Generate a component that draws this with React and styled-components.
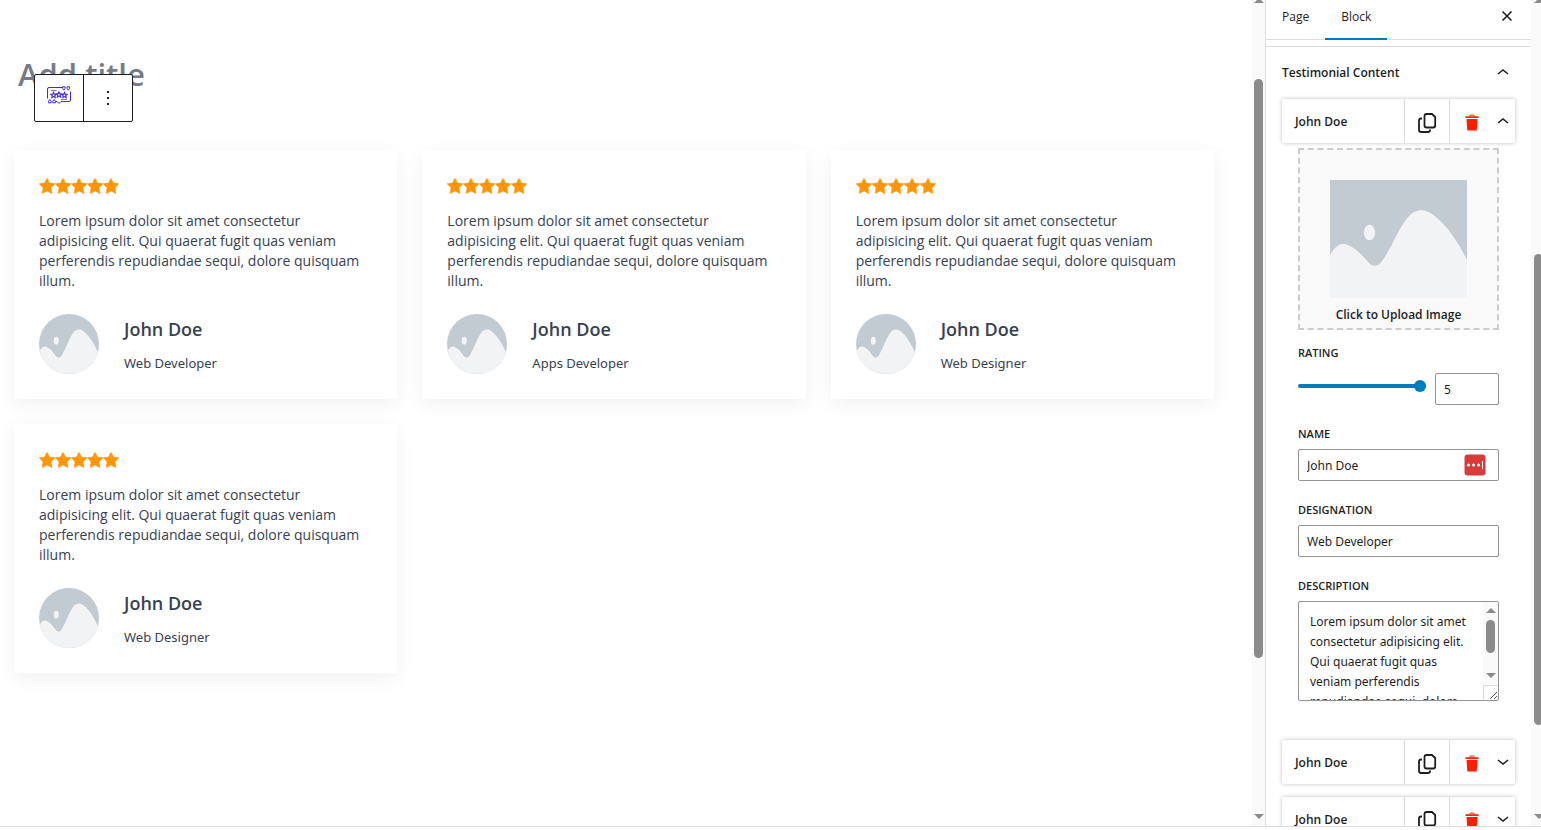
import React, { useState } from 'react';
import styled, { createGlobalStyle } from 'styled-components';

const LOREM =
  'Lorem ipsum dolor sit amet consectetur adipisicing elit. Qui quaerat fugit quas veniam perferendis repudiandae sequi, dolore quisquam illum.';

const testimonials = [
  { id: 1, name: 'John Doe', designation: 'Web Developer' },
  { id: 2, name: 'John Doe', designation: 'Apps Developer' },
  { id: 3, name: 'John Doe', designation: 'Web Designer' },
  { id: 4, name: 'John Doe', designation: 'Web Designer' },
];

function Placeholder({ stretch }) {
  return (
    <svg
      viewBox="0 0 137 118"
      width="100%"
      height="100%"
      preserveAspectRatio={stretch ? 'none' : 'xMidYMid meet'}
      aria-hidden="true"
    >
      <rect width="137" height="118" fill="#c2cad2" />
      <path
        d="M0 75C5 66 11 62 18 65C26 68 33 76 39 83C43 87 48 87 52 81C63 66 69 46 80 35C88 28 97 29 106 37C118 47 128 62 137 80V118H0Z"
        fill="#f1f3f5"
      />
      <ellipse cx="39.5" cy="52.5" rx="5.7" ry="7.7" fill="#f1f3f5" />
    </svg>
  );
}

function Star() {
  return (
    <svg viewBox="0 0 16 16" width="16" height="16" aria-hidden="true">
      <path
        fill="#ff9500"
        stroke="#ff9500"
        strokeWidth="0.6"
        strokeLinejoin="round"
        d="M8 0.3L10.4 5L15.8 5.8L11.9 9.7L12.8 15.5L8 13L3.2 15.5L4.1 9.7L0.2 5.8L5.6 5Z"
      />
    </svg>
  );
}

function BlockIcon() {
  const star = 'l.8 1.7 1.8.2-1.3 1.3.3 1.8-1.6-.9-1.6.9.3-1.8-1.3-1.3 1.8-.2z';
  return (
    <svg viewBox="0 0 24 19" width="24" height="19" fill="none" stroke="#4527d6" aria-hidden="true">
      <path d="M15 1.5H2Q.5 1.5 .5 3V12.5M8.5 15.5H10l2 2 2-2h8q1.5 0 1.5-1.5V5.5" />
      <path d="M4 4.5h5.5M14 13.5h6" strokeOpacity="0.7" />
      <path strokeWidth="1.2" d={`M6.5 6.5${star}M12 6${star}M17.5 6.5${star}`} />
      <path d="M15.5.8h2.6v1.6l-1.3 1.8-1.3-1.8zM20 .8h2.6v1.6l-1.3 1.8-1.3-1.8zM1.5 16.8h2.6v-1.6l-1.3-1.8-1.3 1.8zM5.8 16.8h2.6v-1.6l-1.3-1.8-1.3 1.8z" />
    </svg>
  );
}

function CopyIcon() {
  return (
    <svg viewBox="0 0 20 22" width="20" height="22" fill="none" stroke="#1e1e1e" strokeWidth="1.8" aria-hidden="true">
      <path d="M9.5 2H15l3.2 3v8.5q0 2-2 2H9.5q-2 0-2-2V4q0-2 2-2z" />
      <path d="M5 6.5H4.2Q2 6.5 2 8.500V18q0 2 2.2 2H11q2 0 2-2v-.5" />
    </svg>
  );
}

function TrashIcon() {
  return (
    <svg viewBox="0 0 14 17" width="14" height="17" aria-hidden="true">
      <path fill="none" stroke="#ff1f00" d="M4.5 2.5Q4.5 1 6 1h2q1.5 0 1.5 1.5" />
      <path fill="#ff1f00" d="M.5 2.2h13v1.8H.5zM1.5 5h11l-.8 11.5H2.3z" />
    </svg>
  );
}

function Chevron({ open }) {
  return (
    <svg viewBox="0 0 12 8" width="12" height="8" fill="none" stroke="#1e1e1e" strokeWidth="1.6" aria-hidden="true">
      <path d={open ? 'M1 6L6 2l5 4' : 'M1 2L6 6l5-4'} />
    </svg>
  );
}

function Scrollbar({ before, size, variant }) {
  return (
    <Track $variant={variant} aria-hidden="true">
      <Arrow $up />
      <Spacer $grow={before} />
      <Thumb $grow={size} />
      <Spacer $grow={100 - before - size} />
      <Arrow />
    </Track>
  );
}

function TestimonialCard({ name, designation }) {
  return (
    <Card>
      <Stars role="img" aria-label="5 stars">
        {[1, 2, 3, 4, 5].map((n) => (
          <Star key={n} />
        ))}
      </Stars>
      <Quote>{LOREM}</Quote>
      <Author>
        <Avatar>
          <Placeholder stretch />
        </Avatar>
        <div>
          <Name>{name}</Name>
          <Designation>{designation}</Designation>
        </div>
      </Author>
    </Card>
  );
}

function ItemHeader({ name, open, onToggle }) {
  return (
    <Item>
      <ItemTitle>{name}</ItemTitle>
      <CopyButton aria-label="Duplicate">
        <CopyIcon />
      </CopyButton>
      <DeleteButton aria-label="Remove">
        <TrashIcon />
      </DeleteButton>
      <ToggleButton aria-label="Toggle" aria-expanded={open} onClick={onToggle}>
        <Chevron open={open} />
      </ToggleButton>
    </Item>
  );
}

function App() {
  const [openItem, setOpenItem] = useState(0);
  const [rating, setRating] = useState(5);
  const [name, setName] = useState('John Doe');
  const [designation, setDesignation] = useState('Web Developer');
  const [description, setDescription] = useState(LOREM);

  return (
    <>
      <GlobalStyle />
      <Page>
        <Editor>
          <Canvas>
            <TitleArea>
              <Title>Add title</Title>
              <Toolbar>
                <BlockButton aria-label="Testimonial">
                  <BlockIcon />
                </BlockButton>
                <OptionsButton aria-label="Options">
                  <svg viewBox="0 0 4 16" width="4" height="16" fill="#1e1e1e" aria-hidden="true">
                    <path d="M1 1h2v2H1zM1 7h2v2H1zM1 13h2v2H1z" />
                  </svg>
                </OptionsButton>
              </Toolbar>
            </TitleArea>
            <Grid>
              {testimonials.map((item) => (
                <TestimonialCard key={item.id} {...item} />
              ))}
            </Grid>
          </Canvas>
          <Scrollbar before={9.4} size={71.4} variant="editor" />
        </Editor>
        <Sidebar>
          <Panel>
            <Tabs>
              <Tab>Page</Tab>
              <Tab $active>Block</Tab>
              <CloseButton aria-label="Close">
                <svg viewBox="0 0 12 12" width="12" height="12" stroke="#1e1e1e" strokeWidth="1.6" aria-hidden="true">
                  <path d="M1.5 1.5l9 9M10.5 1.5l-9 9" />
                </svg>
              </CloseButton>
            </Tabs>
            <PanelBody>
              <PanelTitle>
                Testimonial Content
                <Chevron open />
              </PanelTitle>
              {[0, 1, 2].map((index) => (
                <ItemWrap key={index}>
                  <ItemHeader
                    name="John Doe"
                    open={openItem === index}
                    onToggle={() => setOpenItem(openItem === index ? null : index)}
                  />
                  {openItem === index && (
                    <Form>
                      <Upload>
                        <UploadImage>
                          <Placeholder />
                        </UploadImage>
                        Click to Upload Image
                      </Upload>
                      <RatingField>
                        <Label htmlFor="rating">Rating</Label>
                        <RangeRow>
                          <Range
                            id="rating"
                            type="range"
                            min="1"
                            max="5"
                            value={rating}
                            onChange={(e) => setRating(e.target.value)}
                          />
                          <NumberInput
                            aria-label="Rating value"
                            value={rating}
                            onChange={(e) => setRating(e.target.value)}
                          />
                        </RangeRow>
                      </RatingField>
                      <Field>
                        <Label htmlFor="name">Name</Label>
                        <InputBox>
                          <BareInput id="name" value={name} onChange={(e) => setName(e.target.value)} />
                          <svg viewBox="0 0 22 22" width="22" height="22" aria-hidden="true">
                            <rect x="0.5" y="0.5" width="21" height="21" rx="3" fill="#d93a3a" />
                            <g fill="#fff">
                              <circle cx="4.5" cy="11" r="1.5" />
                              <circle cx="9.5" cy="11" r="1.5" />
                              <circle cx="14.5" cy="11" r="1.5" />
                              <rect x="18" y="7" width="1" height="8" />
                            </g>
                          </svg>
                        </InputBox>
                      </Field>
                      <Field>
                        <Label htmlFor="designation">Designation</Label>
                        <InputBox>
                          <BareInput
                            id="designation"
                            value={designation}
                            onChange={(e) => setDesignation(e.target.value)}
                          />
                        </InputBox>
                      </Field>
                      <Field>
                        <Label htmlFor="description">Description</Label>
                        <TextBox>
                          <TextArea
                            id="description"
                            value={description}
                            onChange={(e) => setDescription(e.target.value)}
                          />
                          <TextSide>
                            <Scrollbar before={12} size={55} variant="text" />
                            <Grip>
                              <svg viewBox="0 0 10 10" width="10" height="10" stroke="#555" aria-hidden="true">
                                <path d="M2 9L9 2M6 9l3-3" />
                              </svg>
                            </Grip>
                          </TextSide>
                        </TextBox>
                      </Field>
                    </Form>
                  )}
                </ItemWrap>
              ))}
            </PanelBody>
          </Panel>
          <Scrollbar before={31} size={58} variant="sidebar" />
        </Sidebar>
      </Page>
    </>
  );
}

export default App;

const GlobalStyle = createGlobalStyle`
  * {
    box-sizing: border-box;
  }

  body {
    margin: 0;
    background: #fff;
    color: #1e1e1e;
    font-family: 'Open Sans', 'Noto Sans', sans-serif;
    font-size: 12px;
  }

  button,
  input,
  textarea {
    margin: 0;
    padding: 0;
    border: 0;
    background: none;
    color: inherit;
    font: inherit;
  }

  input,
  textarea {
    font-family: 'Noto Sans', sans-serif;
  }

  svg {
    display: block;
    flex-shrink: 0;
  }
`;

const Page = styled.div`
  display: flex;
  height: calc(100vh - 3px);
  overflow: hidden;
  border-bottom: 1px solid #ddd;
`;

const Editor = styled.main`
  display: flex;
  flex: 1;
  min-width: 0;
`;

const Canvas = styled.div`
  flex: 1;
  min-width: 0;
  padding: 54px 38px 0 14px;
`;

const TitleArea = styled.div`
  position: relative;
  height: 96px;
  padding-left: 4px;
`;

const Title = styled.h1`
  margin: 0;
  color: #757b87;
  font-size: 31px;
  font-weight: 600;
  line-height: 40px;
`;

// floats over the title while the block is selected
const Toolbar = styled.div`
  position: absolute;
  top: 20px;
  left: 20px;
  display: flex;
  border: 1px solid #1e1e1e;
  border-radius: 2px;
  background: #fff;
`;

const ToolbarButton = styled.button`
  display: flex;
  align-items: center;
  justify-content: center;
  width: 48px;
  height: 46px;
`;

const BlockButton = styled(ToolbarButton)`
  padding-bottom: 5px;
`;

const OptionsButton = styled(ToolbarButton)`
  width: 49px;
  border-left: 1px solid #1e1e1e;
`;

const Grid = styled.div`
  display: grid;
  grid-template-columns: repeat(3, 1fr);
  gap: 25px;
`;

const Card = styled.article`
  padding: 28px 25px 25px;
  background: #fff;
  box-shadow: 0 5px 20px rgba(0, 0, 0, 0.06);
  color: #374151;
`;

const Stars = styled.div`
  display: flex;
  margin-bottom: 17px;
`;

const Quote = styled.p`
  margin: 0 0 23px;
  font-size: 14px;
  line-height: 20px;
`;

const Author = styled.div`
  display: flex;
  gap: 25px;
`;

const Avatar = styled.div`
  width: 60px;
  height: 60px;
  overflow: hidden;
  border-radius: 50%;
`;

const Name = styled.h3`
  margin: 0 0 9px;
  font-size: 18px;
  font-weight: 600;
  line-height: 30px;
`;

const Designation = styled.p`
  margin: 0;
  font-family: 'Noto Sans', sans-serif;
  font-size: 13px;
  line-height: 20px;
`;

const Sidebar = styled.aside`
  display: flex;
  width: 276px;
  overflow: hidden;
  border-left: 1px solid #ddd;
`;

const Panel = styled.div`
  width: 265px;
  flex-shrink: 0;
`;

const Tabs = styled.div`
  display: flex;
  height: 40px;
  border-bottom: 1px solid #ddd;
`;

const Tab = styled.button`
  height: 40px;
  padding: 0 16px 6px;
  border-bottom: 2px solid ${(props) => (props.$active ? '#007cba' : 'transparent')};
`;

const CloseButton = styled.button`
  display: flex;
  justify-content: center;
  width: 24px;
  margin: 10px 12px 0 auto;
`;

const PanelBody = styled.div`
  margin-top: 6px;
  padding: 0 16px;
  border-top: 1px solid #ddd;
`;

const PanelTitle = styled.h2`
  display: flex;
  align-items: center;
  justify-content: space-between;
  height: 52px;
  margin: 0;
  padding: 0 6px 2px 0;
  font-size: 12px;
  font-weight: 600;
`;

const ItemWrap = styled.section`
  margin-bottom: 13px;
`;

const Item = styled.div`
  display: flex;
  height: 44px;
  border-radius: 2px;
  background: #fff;
  box-shadow: 0 0 4px rgba(0, 0, 0, 0.25);
`;

const ItemTitle = styled.div`
  flex: 1;
  padding-left: 13px;
  font-weight: 600;
  line-height: 46px;
`;

const ItemButton = styled.button`
  display: flex;
  align-items: center;
  justify-content: center;
  padding-top: 3px;
`;

const CopyButton = styled(ItemButton)`
  width: 45px;
  border-left: 1px solid #ddd;
`;

const DeleteButton = styled(ItemButton)`
  width: 44px;
  border-left: 1px solid #ddd;
`;

const ToggleButton = styled.button`
  display: flex;
  align-items: center;
  width: 22px;
  padding-left: 4px;
`;

const Form = styled.div`
  padding: 5px 16px 26px;
`;

const Upload = styled.button`
  display: flex;
  flex-direction: column;
  align-items: center;
  width: 100%;
  height: 182px;
  padding-top: 30px;
  border: 2px dashed #ccc;
  background: #f9f9f9;
  font-weight: 600;
`;

const UploadImage = styled.span`
  width: 137px;
  height: 118px;
  margin-bottom: 8px;
`;

const Label = styled.label`
  display: block;
  margin-bottom: 7px;
  font-size: 11px;
  font-weight: 600;
  line-height: 16px;
  text-transform: uppercase;
`;

const Field = styled.div`
  margin-top: 21px;
`;

const RatingField = styled.div`
  margin-top: 15px;
`;

const RangeRow = styled.div`
  display: flex;
  align-items: flex-start;
  gap: 9px;
  padding-top: 5px;
`;

const Range = styled.input`
  appearance: none;
  flex: 1;
  min-width: 0;
  height: 26px;

  &::-webkit-slider-runnable-track {
    height: 4px;
    border-radius: 2px;
    background: #007cba;
  }

  &::-webkit-slider-thumb {
    appearance: none;
    width: 12px;
    height: 12px;
    margin-top: -4px;
    border-radius: 50%;
    background: #007cba;
  }
`;

const NumberInput = styled.input`
  width: 64px;
  height: 32px;
  padding: 0 8px;
  border: 1px solid #949494;
  border-radius: 2px;
`;

const InputBox = styled.div`
  display: flex;
  align-items: center;
  height: 32px;
  padding: 0 12px 0 8px;
  border: 1px solid #949494;
  border-radius: 2px;
`;

const BareInput = styled.input`
  flex: 1;
  min-width: 0;
  outline: none;
`;

const TextBox = styled.div`
  display: flex;
  height: 100px;
  border: 1px solid #949494;
  border-radius: 2px;
`;

const TextArea = styled.textarea`
  flex: 1;
  min-width: 0;
  padding: 10px 8px 0 11px;
  overflow: hidden;
  outline: none;
  resize: none;
  line-height: 20px;
`;

const TextSide = styled.div`
  display: flex;
  flex-direction: column;
  width: 15px;
`;

const Grip = styled.div`
  display: flex;
  align-items: flex-end;
  justify-content: flex-end;
  height: 15px;
  border-top: 1px solid #ddd;
  border-left: 1px solid #ddd;
`;

const trackStyles = {
  editor: 'width: 13px; margin-top: -7px; padding-bottom: 2px;',
  sidebar: 'width: 15px; margin-top: -7px; padding-bottom: 2px;',
  text: 'flex-grow: 1; padding: 1px 0 2px;',
};

const Track = styled.div`
  display: flex;
  flex-shrink: 0;
  flex-direction: column;
  align-items: center;
  background: #fafafa;
  ${(props) => trackStyles[props.$variant]}
`;

const Arrow = styled.span`
  border: 5px solid transparent;
  border-bottom-color: ${(props) => (props.$up ? '#8b8b8b' : 'transparent')};
  border-top-color: ${(props) => (props.$up ? 'transparent' : '#8b8b8b')};
`;

const Spacer = styled.span`
  flex: ${(props) => props.$grow};
`;

const Thumb = styled.span`
  flex: ${(props) => props.$grow};
  width: 9px;
  border-radius: 5px;
  background: #8b8b8b;
`;
